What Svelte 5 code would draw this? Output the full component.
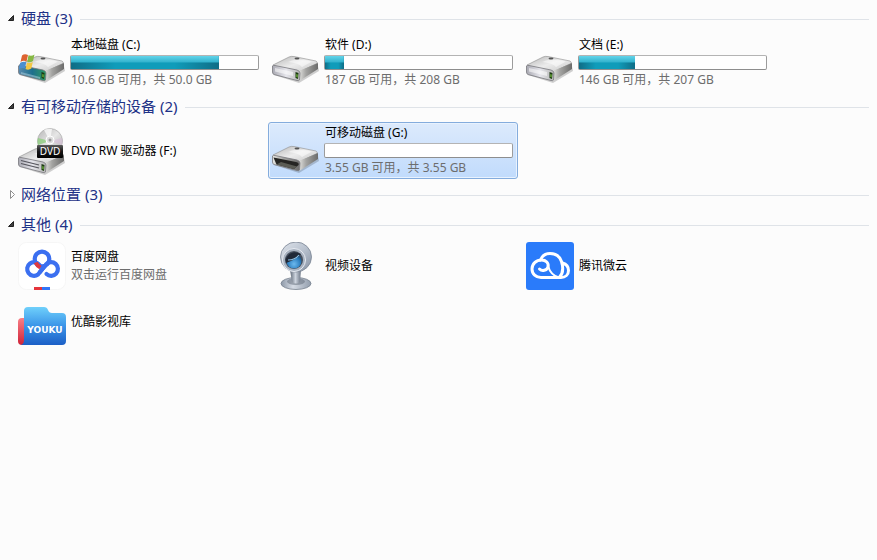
<script>
  let groups = $state([
    {
      title: "硬盘",
      count: 3,
      open: true,
      items: [
        { icon: "system", name: "本地磁盘 (C:)", used: 79, info: "10.6 GB 可用，共 50.0 GB" },
        { icon: "drive", name: "软件 (D:)", used: 10, info: "187 GB 可用，共 208 GB" },
        { icon: "drive", name: "文档 (E:)", used: 30, info: "146 GB 可用，共 207 GB" }
      ]
    },
    {
      title: "有可移动存储的设备",
      count: 2,
      open: true,
      items: [
        { icon: "dvd", name: "DVD RW 驱动器 (F:)" },
        { icon: "removable", name: "可移动磁盘 (G:)", used: 0, info: "3.55 GB 可用，共 3.55 GB" }
      ]
    },
    { title: "网络位置", count: 3, open: false, items: [] },
    {
      title: "其他",
      count: 4,
      open: true,
      items: [
        { icon: "baidu", name: "百度网盘", info: "双击运行百度网盘" },
        { icon: "webcam", name: "视频设备" },
        { icon: "weiyun", name: "腾讯微云" },
        { icon: "youku", name: "优酷影视库" }
      ]
    }
  ]);

  let selected = $state("可移动磁盘 (G:)");
</script>

{#snippet driveBody(front)}
  <path d="M2 37 L27 45 L47 33 L46 28 Z" fill="#000" opacity="0.18" />
  <path d="M1 27 L17 19 Q19 18 22 18.500 L44 23 Q46 24 45 25.500 L27 34 L2 29 Z" fill="url(#drive-top)" stroke="#8d8d8d" stroke-width="0.6" />
  <path d="M27 33 L46 25 L46 31 L28 42.500 L26 42 Z" fill="url(#drive-side)" />
  <path d="M0.500 28 Q1 27 3 27.500 L25 32 Q28 33 28 35 L27.500 42 Q27 43 25 42.500 L2 36.500 Q0.500 36 0.500 34 Z" fill="url(#{front})" stroke="#77777c" stroke-width="0.8" />
  <path d="M16 24 Q24 20 40 23.500 L30 29 Q27 25 16 24 Z" fill="#fff" opacity="0.5" />
  <ellipse cx="25" cy="20.500" rx="2.500" ry="1" fill="#555" />
{/snippet}

{#snippet led()}
  <path d="M23.500 34 L26.500 35 L26 41 L23.500 40 Z" fill="#1c3a12" />
  <path d="M24.500 36 L25.500 36.500 L25.500 39.500 L24.500 39 Z" fill="#8be04a" />
{/snippet}

{#snippet icon(kind)}
  <svg class="icon" viewBox="0 0 48 48" aria-hidden="true">
    {#if kind === "system"}
      <g transform="translate(0 -1)">
        {@render driveBody("drive-teal")}
        <path d="M3 34 L22 39 L22 41 L3 36 Z" fill="#9fc4d4" opacity="0.6" />
        {@render led()}
        <path d="M4 17.500 Q6.500 15.500 10 17 L8.500 23.500 Q5.500 22 2.500 24 Z" fill="#dd6330" />
        <path d="M10.500 17.300 Q13.500 18.500 16.500 16.500 L15 23 Q12 25 9.200 23.700 Z" fill="#86b844" />
        <path d="M2.200 24.800 Q5.500 22.800 8.300 24.300 L6.800 30.500 Q4 29.200 0.800 31 Z" fill="#4a8fd0" />
        <path d="M9 24.500 Q12 25.800 14.800 23.900 L13.300 30.500 Q10.500 32.500 7.500 31 Z" fill="#f3c744" />
      </g>
    {:else if kind === "drive"}
      <g transform="translate(0 -1)">
        {@render driveBody("drive-front")}
        <path d="M3 30 L21 34 L21 38 L3 33.500 Z" fill="#fff" opacity="0.55" />
        {@render led()}
      </g>
    {:else if kind === "removable"}
      <g transform="translate(0 1)">
        {@render driveBody("drive-side")}
        <path d="M1.500 29.500 L24 34 Q27.500 35 26.500 37 L22 41 L4.500 36.500 Z" fill="#252523" />
        <path d="M4.500 36.500 L22 41 L25 38.500 L9 34 Z" fill="#5b5c55" />
      </g>
    {:else if kind === "dvd"}
      <g transform="translate(0 3)">
        {@render driveBody("drive-front")}
        <path d="M3 30.500 L21 35 M3 33.500 L21 38" stroke="#55555c" stroke-width="1.2" />
        {@render led()}
      </g>
      <circle cx="32" cy="14" r="12.500" fill="url(#disc)" stroke="#a9a9a9" stroke-width="0.7" />
      <path d="M32 14 L20 11 A12.500 12.500 0 0 0 20 18 Z" fill="#8fce7f" opacity="0.8" />
      <path d="M32 14 L44 11 A12.500 12.500 0 0 1 44 18 Z" fill="#d7bfd9" opacity="0.6" />
      <path d="M32 14 L26 3 A12.500 12.500 0 0 1 34 2 Z" fill="#fff" opacity="0.7" />
      <circle cx="32" cy="13" r="4" fill="#ddd" stroke="#fff" />
      <circle cx="32" cy="13" r="1.500" fill="#999" />
      <rect x="19" y="18" width="26" height="13" rx="1" fill="url(#dvd-label)" />
      <text x="32" y="28" class="dvd-text">DVD</text>
    {:else if kind === "baidu"}
      <rect x="0.500" y="0.500" width="47" height="47" rx="8" fill="#fff" stroke="#f6f6f6" />
      <g fill="none" stroke="#3b6ff0" stroke-width="4.200">
        <circle cx="24" cy="17" r="7.300" />
        <path d="M21.500 23 A6.800 6.800 0 1 0 20 32.500 L28 22.500 A6.800 6.800 0 1 1 28.500 32" stroke-linecap="round" />
      </g>
      <path d="M17.800 20.500 Q19 23.500 22.500 25.500" fill="none" stroke="#dd3a40" stroke-width="4.200" />
      <path d="M21.500 30.500 L27 24" stroke="#3b6ff0" stroke-width="4.200" />
      <rect x="16" y="45" width="8" height="3" fill="#e5343c" />
      <rect x="24" y="45" width="8" height="3" fill="#3175f7" />
    {:else if kind === "webcam"}
      <ellipse cx="24" cy="41.500" rx="15" ry="6" fill="url(#cam-base)" stroke="#76808e" stroke-width="0.8" />
      <ellipse cx="24" cy="39.500" rx="9" ry="3.500" fill="#5d6775" opacity="0.5" />
      <path d="M18 28 H29 L28 40 Q24 43 20 40 Z" fill="url(#cam-stem)" />
      <ellipse cx="24" cy="15" rx="15.500" ry="15" fill="url(#cam-head)" stroke="#7b8594" stroke-width="0.8" />
      <circle cx="22" cy="18" r="11.500" fill="#a8b2c0" stroke="#e7ebf2" stroke-width="1" />
      <circle cx="22" cy="18" r="9" fill="#46505e" />
      <circle cx="22" cy="19" r="7.500" fill="url(#cam-lens)" />
      <path d="M13.500 17 Q19 7 29 12 Q25 17 14 21 Z" fill="#202938" />
      <path d="M16 18 Q23 18 27 13" fill="none" stroke="#8fc3e6" stroke-width="1.200" />
    {:else if kind === "weiyun"}
      <rect width="48" height="48" rx="3" fill="#2a7bfa" />
      <g fill="none" stroke="#fff" stroke-width="3" stroke-linecap="round">
        <path d="M13.500 27 C16 29.500 21 28.500 22 25 C23 21 20 18 15.500 18 C10 18 6 22 6 27 C6 32 10 35.500 15 35.500 H35 C39.500 35.500 42.500 32.500 42.500 28.500 C42.500 25 40 22 36.500 21" />
        <path d="M14.500 18 C16 14 19.500 11.500 24 11.500 C30 11.500 34 15 35.500 19.500 C37.500 26 37.500 31 33.500 35" />
        <path d="M22 24 C23.500 29 27 34 33 35.500" stroke-width="2" />
      </g>
    {:else if kind === "youku"}
      <path d="M4 20 H9 V47 H4 Q0 47 0 43 V24 Q0 20 4 20 Z" fill="url(#youku-red)" />
      <path d="M6 13 Q6 9 10 9 H26 Q29 9 30 12 Q31 15 34 15 H44 Q48 15 48 19 V43 Q48 47 44 47 H3 Q6 46 6 42 Z" fill="url(#youku-blue)" />
      <text x="27" y="35" class="youku-text">YOUKU</text>
    {/if}
  </svg>
{/snippet}

<svg class="defs" aria-hidden="true">
  <defs>
    <linearGradient id="drive-top" x1="0" y1="0" x2="1" y2="1">
      <stop offset="0" stop-color="#b4b4b4" />
      <stop offset="0.5" stop-color="#ececec" />
      <stop offset="1" stop-color="#c6c6c6" />
    </linearGradient>
    <linearGradient id="drive-side" x1="0" y1="0" x2="1" y2="0">
      <stop offset="0" stop-color="#e9e9e6" />
      <stop offset="0.4" stop-color="#a4a4a2" />
      <stop offset="1" stop-color="#6c6c6b" />
    </linearGradient>
    <linearGradient id="drive-front" x1="0" y1="0" x2="1" y2="0">
      <stop offset="0" stop-color="#a9a9b2" />
      <stop offset="0.5" stop-color="#e6e6ec" />
      <stop offset="1" stop-color="#b4b4b4" />
    </linearGradient>
    <linearGradient id="drive-teal" x1="0" y1="0" x2="1" y2="0">
      <stop offset="0" stop-color="#5b8bae" />
      <stop offset="0.5" stop-color="#1d6f8d" />
      <stop offset="1" stop-color="#2f9c62" />
    </linearGradient>
    <linearGradient id="disc" x1="0" y1="0" x2="1" y2="1">
      <stop offset="0" stop-color="#b5b5b5" />
      <stop offset="0.5" stop-color="#e6e6e6" />
      <stop offset="1" stop-color="#acacac" />
    </linearGradient>
    <linearGradient id="dvd-label" x1="0" y1="0" x2="0" y2="1">
      <stop offset="0" stop-color="#5a5a5a" />
      <stop offset="0.5" stop-color="#161616" />
      <stop offset="1" stop-color="#000" />
    </linearGradient>
    <linearGradient id="cam-head" x1="0" y1="0" x2="1" y2="1">
      <stop offset="0" stop-color="#dfe4eb" />
      <stop offset="0.5" stop-color="#b9c2cf" />
      <stop offset="1" stop-color="#8490a1" />
    </linearGradient>
    <linearGradient id="cam-base" x1="0" y1="0" x2="1" y2="0">
      <stop offset="0" stop-color="#8e99a8" />
      <stop offset="0.4" stop-color="#d5dbe4" />
      <stop offset="1" stop-color="#929dac" />
    </linearGradient>
    <linearGradient id="cam-stem" x1="0" y1="0" x2="1" y2="0">
      <stop offset="0" stop-color="#5e6876" />
      <stop offset="0.5" stop-color="#cdd4de" />
      <stop offset="1" stop-color="#6b7584" />
    </linearGradient>
    <radialGradient id="cam-lens" cx="0.5" cy="0.7" r="0.7">
      <stop offset="0" stop-color="#6cb9ee" />
      <stop offset="0.6" stop-color="#2d7fc0" />
      <stop offset="1" stop-color="#174067" />
    </radialGradient>
    <linearGradient id="youku-red" x1="0" y1="0" x2="0" y2="1">
      <stop offset="0" stop-color="#f87f86" />
      <stop offset="1" stop-color="#cf2237" />
    </linearGradient>
    <linearGradient id="youku-blue" x1="0" y1="0" x2="0" y2="1">
      <stop offset="0" stop-color="#6fd0fb" />
      <stop offset="0.5" stop-color="#3a94e8" />
      <stop offset="1" stop-color="#1c5fc6" />
    </linearGradient>
  </defs>
</svg>

<main class="explorer">
  {#each groups as group}
    <section class="group">
      <h2>
        <button class="group-header" aria-expanded={group.open} onclick={() => (group.open = !group.open)}>
          <svg class="arrow" viewBox="0 0 8 10" aria-hidden="true">
            {#if group.open}
              <path d="M5.500 2.500 V7.500 H0.500 Z" fill="#404040" stroke="#222" />
            {:else}
              <path d="M2.500 1.500 L6.500 5.500 L2.500 9.500 Z" fill="#fff" stroke="#8f8f8f" />
            {/if}
          </svg>
          <span>{group.title} ({group.count})</span>
        </button>
      </h2>
      {#if group.open}
        <div class="tiles">
          {#each group.items as item}
            <button class="tile" class:selected={selected === item.name} onclick={() => (selected = item.name)}>
              {@render icon(item.icon)}
              <span class="details">
                <span class="name">{item.name}</span>
                {#if item.used !== undefined}
                  <span class="bar">
                    <span class="fill" style="width: {item.used}%"></span>
                  </span>
                {/if}
                {#if item.info}
                  <span class="info">{item.info}</span>
                {/if}
              </span>
            </button>
          {/each}
        </div>
      {/if}
    </section>
  {/each}
</main>

<style>
  :global(body) {
    margin: 0;
    background: #fcfcfc;
  }

  .defs {
    position: absolute;
    width: 0;
    height: 0;
  }

  .explorer {
    padding: 5px 8px;
    font-family: "Noto Sans", "Noto Sans CJK SC", sans-serif;
    font-size: 12px;
    color: #000;
  }

  button {
    padding: 0;
    border: 0;
    background: none;
    font: inherit;
    color: inherit;
    text-align: left;
  }

  .group {
    margin-bottom: 2px;
  }

  h2 {
    display: flex;
    align-items: center;
    gap: 8px;
    height: 28px;
    margin: 0;
    font-size: 15px;
    font-weight: normal;
  }

  h2::after {
    content: "";
    flex: 1;
    height: 1px;
    background: #dfe3e8;
  }

  .group-header {
    display: flex;
    align-items: center;
    gap: 5px;
    padding-bottom: 2px;
    line-height: 26px;
    color: #1e3287;
  }

  .arrow {
    width: 8px;
    height: 10px;
  }

  .tiles {
    display: grid;
    grid-template-columns: repeat(auto-fill, 250px);
    gap: 4px;
    padding: 1px 0 0 6px;
  }

  .tile {
    display: flex;
    align-items: center;
    gap: 4px;
    box-sizing: border-box;
    padding: 1px 3px;
    border: 1px solid transparent;
    border-radius: 3px;
  }

  .tile.selected {
    border-color: #84acdd;
    background: linear-gradient(#dceafc, #c1dbfc);
    box-shadow: inset 0 0 0 1px #e8f2fe;
  }

  .icon {
    flex: none;
    width: 48px;
    height: 48px;
  }

  .details {
    display: flex;
    flex-direction: column;
    flex: 1;
    line-height: 18px;
  }

  .name,
  .info {
    padding-left: 1px;
    white-space: nowrap;
  }

  .info {
    color: #6d6d6d;
  }

  .bar {
    box-sizing: border-box;
    width: 189px;
    height: 15px;
    margin: 1px 0;
    border: 1px solid #a8a8a8;
    border-color: #b4b4b4 #9c9c9c #8e8e8e;
    border-radius: 2px;
    background: #fff;
  }

  /* glossy upper half over a lower half that darkens towards both ends */
  .fill {
    display: block;
    height: 100%;
    background:
      linear-gradient(#62d4ea, #2fb0cb) top / 100% 50% no-repeat,
      linear-gradient(90deg, #0f6d86, #0f9cba 30%, #0f9cba 70%, #0f6d86);
  }

  .dvd-text {
    font: 10px "Noto Sans", sans-serif;
    fill: #fff;
    text-anchor: middle;
  }

  .youku-text {
    font: bold 9px "DejaVu Sans", sans-serif;
    fill: #fff;
    text-anchor: middle;
  }
</style>
